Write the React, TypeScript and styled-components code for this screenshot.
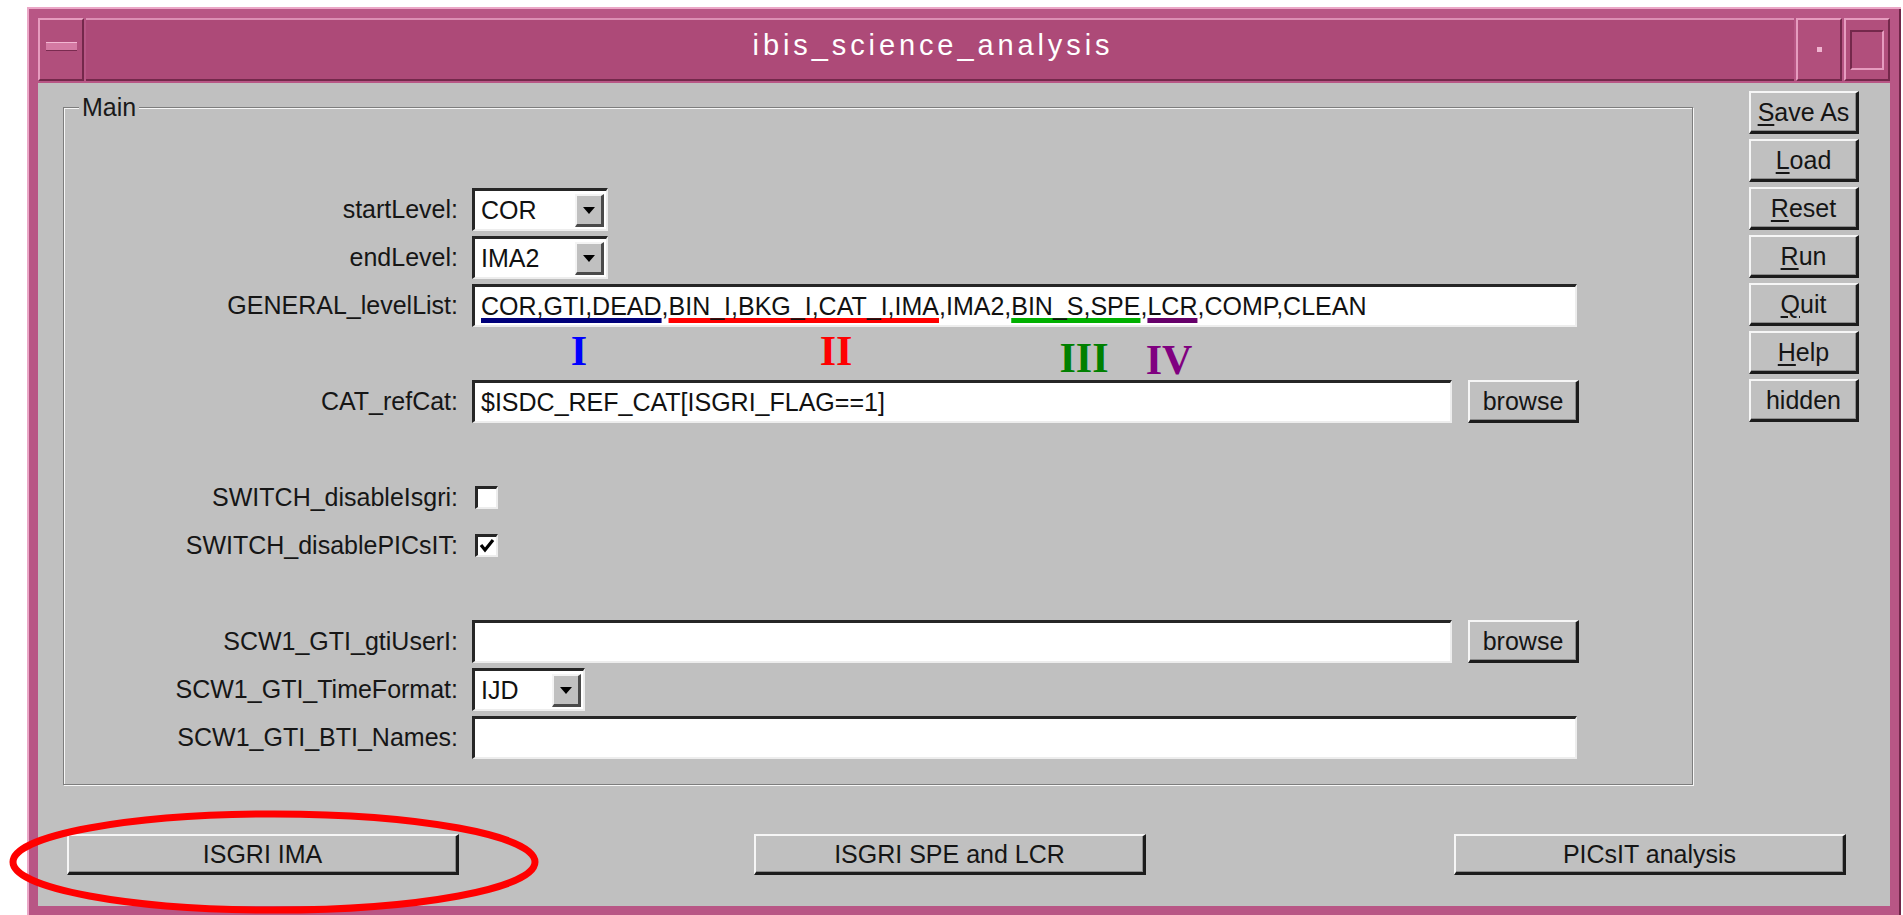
import styled, { createGlobalStyle } from 'styled-components'

const GlobalStyle = createGlobalStyle`
  html, body {
    margin: 0;
    padding: 0;
    background: #fff;
  }
  body {
    font-family: "Liberation Sans", Arial, sans-serif;
  }
`

const Page = styled.div`
  position: relative;
  box-sizing: border-box;
  width: 1903px;
  height: 915px;
  overflow: hidden;
  background: #fff;
  padding: 7px 0 0 27px;
`

const Window = styled.div`
  box-sizing: border-box;
  width: 1874px;
  height: 910px;
  padding: 11px;
  background: #b85685;
  box-shadow: inset 2px 2px 0 #eba7c7, inset -2px -2px 0 #6e2547;
  display: flex;
  flex-direction: column;
`

const TitleBar = styled.div`
  height: 63px;
  display: flex;
  gap: 2px;
  flex: none;
  margin-bottom: 2px;
`

const FrameButton = styled.div`
  box-sizing: border-box;
  width: 46px;
  height: 100%;
  flex: none;
  display: flex;
  align-items: center;
  justify-content: center;
  background: #b14f7c;
  border-top: 2px solid #e69cbf;
  border-left: 2px solid #e69cbf;
  border-bottom: 2px solid #74284b;
  border-right: 2px solid #74284b;
`

const MinimizeBar = styled.div`
  width: 31px;
  height: 7px;
  margin-top: -6px;
  background: #d47aa3;
  border-top: 1px solid #f2b6d2;
  border-bottom: 1px solid #7a2b50;
`

const IconDot = styled.div`
  width: 5px;
  height: 5px;
  background: #f0b4d0;
`

const MaximizeBox = styled.div`
  box-sizing: border-box;
  width: 34px;
  height: 40px;
  border-top: 2px solid #74284b;
  border-left: 2px solid #74284b;
  border-bottom: 2px solid #e69cbf;
  border-right: 2px solid #e69cbf;
`

const Title = styled.div`
  box-sizing: border-box;
  flex: 1;
  display: flex;
  align-items: center;
  justify-content: center;
  background: #ad4a78;
  border-top: 2px solid #dc8fb4;
  border-bottom: 2px solid #74284b;
  color: #fff;
  font-size: 29px;
  letter-spacing: 3.9px;
  padding: 0 14px 8px 0;
`

const Body = styled.div`
  flex: 1;
  display: flex;
  flex-direction: column;
  background: #c0c0c0;
`

const Upper = styled.div`
  display: flex;
  align-items: flex-start;
  padding: 8px 31px 0 25px;
`

const Group = styled.fieldset`
  box-sizing: border-box;
  width: 1630px;
  margin: 2px 0 0 0;
  padding: 66px 0 25px 0;
  border: 1px solid #7d7d7d;
  box-shadow: 1px 1px 0 #f7f7f7, inset 1px 1px 0 #f7f7f7;
  display: flex;
  flex-direction: column;
  gap: 5px;
`

const GroupTitle = styled.legend`
  margin-left: 15px;
  padding: 0 3px;
  background: #c0c0c0;
  font-size: 25px;
  line-height: 29px;
  color: #1a1a1a;
`

const Row = styled.div`
  height: 43px;
  display: flex;
  align-items: center;
  gap: 14px;
`

const Label = styled.div`
  width: 394px;
  flex: none;
  text-align: right;
  font-size: 25px;
  color: #161616;
  white-space: nowrap;
`

const Entry = styled.div<{ $width: number }>`
  box-sizing: border-box;
  width: ${p => p.$width}px;
  height: 43px;
  flex: none;
  display: flex;
  align-items: center;
  padding: 0 6px;
  background: #fff;
  border-top: 3px solid #262626;
  border-left: 3px solid #262626;
  border-bottom: 2px solid #ededed;
  border-right: 2px solid #ededed;
  font-size: 25px;
  line-height: 29px;
  color: #111;
  white-space: nowrap;
  overflow: hidden;
`

const Marked = styled.span<{ $color: string }>`
  text-decoration: underline;
  text-decoration-color: ${p => p.$color};
  text-decoration-thickness: 5px;
  text-underline-offset: 3px;
  text-decoration-skip-ink: none;
`

const ComboValue = styled.span`
  flex: 1;
`

const ArrowBox = styled.div`
  box-sizing: border-box;
  width: 29px;
  height: 33px;
  margin-right: -4px;
  display: flex;
  align-items: center;
  justify-content: center;
  background: #c0c0c0;
  border-top: 2px solid #f4f4f4;
  border-left: 2px solid #f4f4f4;
  border-bottom: 3px solid #4a4a4a;
  border-right: 3px solid #4a4a4a;
`

const Notes = styled.div`
  position: relative;
  flex: 1;
  height: 100%;
`

const Numeral = styled.span<{ $color: string; $x: number; $y: number }>`
  position: absolute;
  left: ${p => p.$x}px;
  top: ${p => p.$y}px;
  transform: translateX(-50%);
  font-family: "Liberation Serif", "Times New Roman", serif;
  font-weight: bold;
  font-size: 42px;
  line-height: 1;
  color: ${p => p.$color};
`

const CheckBox = styled.div`
  box-sizing: border-box;
  width: 23px;
  height: 23px;
  margin-left: 3px;
  display: flex;
  align-items: center;
  justify-content: center;
  background: #fff;
  border-top: 3px solid #262626;
  border-left: 3px solid #262626;
  border-bottom: 2px solid #ededed;
  border-right: 2px solid #ededed;
`

const RaisedButton = styled.div<{ $width: number; $height?: number }>`
  box-sizing: border-box;
  width: ${p => p.$width}px;
  height: ${p => p.$height ?? 43}px;
  flex: none;
  display: flex;
  align-items: center;
  justify-content: center;
  background: #c0c0c0;
  border-top: 2px solid #f6f6f6;
  border-left: 2px solid #f6f6f6;
  border-bottom: 3px solid #1c1c1c;
  border-right: 3px solid #1c1c1c;
  box-shadow: inset -1px -1px 0 #8c8c8c;
  font-size: 25px;
  color: #151515;
  white-space: nowrap;

  u {
    text-underline-offset: 3px;
  }
`

const BrowseButton = styled(RaisedButton)`
  margin-left: 2px;
`

const SideColumn = styled.div`
  margin-left: auto;
  display: flex;
  flex-direction: column;
  gap: 5px;
`

const BottomBar = styled.div`
  display: flex;
  gap: 295px;
  margin-top: 49px;
  padding: 0 44px 0 29px;

  & > :last-child {
    margin-left: auto;
  }
`

const Highlight = styled.svg`
  position: absolute;
  left: 0;
  top: 0;
  pointer-events: none;
`

function DownArrow() {
  return (
    <svg width="14" height="10" viewBox="0 0 14 10">
      <polygon points="1,2 13,2 7,9" fill="#000" />
    </svg>
  )
}

function Combo({ value, width }: { value: string; width: number }) {
  return (
    <Entry $width={width}>
      <ComboValue>{value}</ComboValue>
      <ArrowBox>
        <DownArrow />
      </ArrowBox>
    </Entry>
  )
}

function Check({ checked }: { checked?: boolean }) {
  return (
    <CheckBox>
      {checked && (
        <svg width="16" height="16" viewBox="0 0 16 16">
          <polyline points="2,7 6,12 14,2" fill="none" stroke="#000" strokeWidth="3.2" />
        </svg>
      )}
    </CheckBox>
  )
}

const sideButtons: [string, string][] = [
  ['S', 'ave As'],
  ['L', 'oad'],
  ['R', 'eset'],
  ['R', 'un'],
  ['Q', 'uit'],
  ['H', 'elp'],
]

export default function App() {
  return (
    <Page>
      <GlobalStyle />
      <Window>
        <TitleBar>
          <FrameButton>
            <MinimizeBar />
          </FrameButton>
          <Title>ibis_science_analysis</Title>
          <FrameButton>
            <IconDot />
          </FrameButton>
          <FrameButton>
            <MaximizeBox />
          </FrameButton>
        </TitleBar>
        <Body>
          <Upper>
            <Group>
              <GroupTitle>Main</GroupTitle>
              <Row>
                <Label>startLevel:</Label>
                <Combo value="COR" width={136} />
              </Row>
              <Row>
                <Label>endLevel:</Label>
                <Combo value="IMA2" width={136} />
              </Row>
              <Row>
                <Label>GENERAL_levelList:</Label>
                <Entry $width={1105}>
                  <span>
                    <Marked $color="#00007a">COR,GTI,DEAD</Marked>,
                    <Marked $color="#ff0000">BIN_I,BKG_I,CAT_I,IMA</Marked>,IMA2,
                    <Marked $color="#00b000">BIN_S,SPE</Marked>,
                    <Marked $color="#66006a">LCR</Marked>,COMP,CLEAN
                  </span>
                </Entry>
              </Row>
              <Row>
                <Label />
                <Notes>
                  <Numeral $color="#0000ff" $x={107} $y={-2}>I</Numeral>
                  <Numeral $color="#ff0000" $x={364} $y={-2}>II</Numeral>
                  <Numeral $color="#008000" $x={612} $y={5}>III</Numeral>
                  <Numeral $color="#800080" $x={697} $y={7}>IV</Numeral>
                </Notes>
              </Row>
              <Row>
                <Label>CAT_refCat:</Label>
                <Entry $width={980}>$ISDC_REF_CAT[ISGRI_FLAG==1]</Entry>
                <BrowseButton $width={111}>browse</BrowseButton>
              </Row>
              <Row />
              <Row>
                <Label>SWITCH_disableIsgri:</Label>
                <Check />
              </Row>
              <Row>
                <Label>SWITCH_disablePICsIT:</Label>
                <Check checked />
              </Row>
              <Row />
              <Row>
                <Label>SCW1_GTI_gtiUserI:</Label>
                <Entry $width={980} />
                <BrowseButton $width={111}>browse</BrowseButton>
              </Row>
              <Row>
                <Label>SCW1_GTI_TimeFormat:</Label>
                <Combo value="IJD" width={113} />
              </Row>
              <Row>
                <Label>SCW1_GTI_BTI_Names:</Label>
                <Entry $width={1105} />
              </Row>
            </Group>
            <SideColumn>
              {sideButtons.map(([key, rest], i) => (
                <RaisedButton key={i} $width={110}>
                  <span>
                    <u>{key}</u>
                    {rest}
                  </span>
                </RaisedButton>
              ))}
              <RaisedButton $width={110}>hidden</RaisedButton>
            </SideColumn>
          </Upper>
          <BottomBar>
            <RaisedButton $width={392} $height={41}>ISGRI IMA</RaisedButton>
            <RaisedButton $width={392} $height={41}>ISGRI SPE and LCR</RaisedButton>
            <RaisedButton $width={392} $height={41}>PICsIT analysis</RaisedButton>
          </BottomBar>
        </Body>
      </Window>
      <Highlight width="1903" height="915" viewBox="0 0 1903 915">
        <ellipse cx="274" cy="862" rx="261" ry="48" fill="none" stroke="#ff0000" strokeWidth="7" />
      </Highlight>
    </Page>
  )
}
